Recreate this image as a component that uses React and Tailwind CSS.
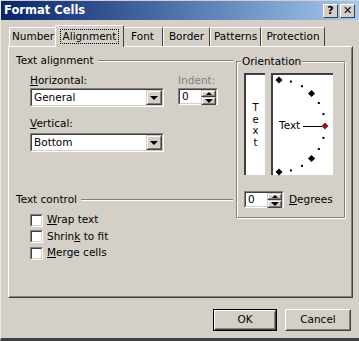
import React from "react";

const font = { fontFamily: "'DejaVu Sans', 'Liberation Sans', sans-serif" };

function Sunken({ className = "", children }) {
  return (
    <div className={"border border-t-[#808080] border-l-[#808080] border-b-white border-r-white " + className}>
      <div className="h-full w-full border border-t-[#404040] border-l-[#404040] border-b-[#d4d0c8] border-r-[#d4d0c8] bg-white flex items-center">
        {children}
      </div>
    </div>
  );
}

function ArrowBtn({ up = false, className = "" }) {
  return (
    <div className={"bg-[#d4d0c8] border border-t-[#d4d0c8] border-l-[#d4d0c8] border-b-[#404040] border-r-[#404040] flex " + className}>
      <div className="flex-1 border border-t-white border-l-white border-b-[#808080] border-r-[#808080] flex items-center justify-center">
        <div className={up ? "w-0 h-0 border-x-[3px] border-x-transparent border-b-[3px] border-b-black" : "w-0 h-0 border-x-[4px] border-x-transparent border-t-[4px] border-t-black"} />
      </div>
    </div>
  );
}

function Combo({ value }) {
  return (
    <Sunken className="w-[134px] h-[19px]">
      <span className="flex-1 pl-[2px] text-[10.5px] leading-none">{value}</span>
      <ArrowBtn className="w-[16px] h-[15px]" />
    </Sunken>
  );
}

function Spin({ value }) {
  return (
    <Sunken className="w-[40px] h-[17px]">
      <span className="flex-1 pl-[2px] text-[10.5px] leading-none">{value}</span>
      <div className="flex flex-col w-[15px] h-full">
        <ArrowBtn up className="h-[7.5px]" />
        <ArrowBtn className="h-[7.5px]" />
      </div>
    </Sunken>
  );
}

function Check({ label, u }) {
  const i = label.indexOf(u);
  return (
    <div className="flex items-center gap-[4px] h-[16.5px]">
      <div className="w-[13px] h-[13px] border border-t-[#808080] border-l-[#808080] border-b-white border-r-white">
        <div className="w-full h-full border border-t-[#404040] border-l-[#404040] border-b-[#d4d0c8] border-r-[#d4d0c8] bg-white" />
      </div>
      <span className="text-[10.5px]">
        {label.slice(0, i)}
        <span className="underline">{u}</span>
        {label.slice(i + 1)}
      </span>
    </div>
  );
}

function Tab({ label, selected, w }) {
  if (selected) {
    return (
      <div className={"relative z-10 -mb-[1px] h-[22px] bg-[#d4d0c8] border-t border-l border-t-white border-l-white border-r border-r-[#404040] flex items-center justify-center -mx-[2px] " + w}>
        <span className="text-[10.5px] px-[2px] outline-1 outline-dotted outline-black leading-[13px]">{label}</span>
      </div>
    );
  }
  return (
    <div className={"h-[19px] mt-[3px] bg-[#d4d0c8] border-t border-l border-t-white border-l-white border-r border-r-[#404040] flex items-center justify-center " + w}>
      <span className="text-[10.5px]">{label}</span>
    </div>
  );
}

function Dial() {
  const cx = 6, cy = 51, r = 46;
  const dots = [];
  for (let a = 90; a >= -90; a -= 15) {
    const rad = (a * Math.PI) / 180;
    const x = cx + r * Math.cos(rad);
    const y = cy - r * Math.sin(rad);
    const big = a % 45 === 0 && a !== 0;
    if (a === 0) continue;
    if (big) {
      dots.push(<rect key={a} x={x - 2.5} y={y - 2.5} width={5} height={5} transform={`rotate(45 ${x} ${y})`} fill="black" />);
    } else {
      dots.push(<rect key={a} x={x - 1} y={y - 1} width={2} height={2} fill="black" />);
    }
  }
  return (
    <svg width="60" height="102" className="absolute left-0 top-0">
      {dots}
      <line x1="30" y1={cy + 0.5} x2="49" y2={cy + 0.5} stroke="black" strokeWidth="1" />
      <rect x={52 - 2.5} y={cy - 2.5} width={5} height={5} transform={`rotate(45 52 ${cy})`} fill="#8b1a1a" />
    </svg>
  );
}

export default function App() {
  return (
    <div style={font} className="w-[359px] h-[341px] bg-[#d4d0c8] text-black flex flex-col border-l border-l-[#ece9d8] border-b-[3px] border-b-[#404040] overflow-hidden">
      <div className="h-[19px] bg-linear-to-r from-[#0a246a] to-[#a6caf0] flex items-center justify-between pl-[3px] pr-[4px] mt-[1px]">
        <span className="text-white font-bold text-[11.5px] leading-none">Format Cells</span>
        <div className="flex gap-[2px]">
          <div className="w-[15px] h-[14px] bg-[#d4d0c8] border border-t-white border-l-white border-b-[#404040] border-r-[#404040] flex items-center justify-center text-[11px] font-bold leading-none">?</div>
          <div className="w-[15px] h-[14px] bg-[#d4d0c8] border border-t-white border-l-white border-b-[#404040] border-r-[#404040] flex items-center justify-center text-[11px] font-bold leading-none">✕</div>
        </div>
      </div>

      <div className="flex-1 flex flex-col pl-[7px] pr-[6px] pt-[4px]">
        <div className="flex items-end pl-[1px] h-[22px]">
          <Tab label="Number" w="w-[48px]" />
          <Tab label="Alignment" selected w="w-[69px]" />
          <Tab label="Font" w="w-[41px]" />
          <Tab label="Border" w="w-[47px]" />
          <Tab label="Patterns" w="w-[51px]" />
          <Tab label="Protection" w="w-[64px]" />
        </div>
        <div className="h-[252px] border border-t-white border-l-white border-b-[#404040] border-r-[#404040]">
          <div className="h-full border border-t-transparent border-l-transparent border-b-[#808080] border-r-[#808080] flex pl-[6px] pr-[4px] pt-[6px]">
            <div className="w-[217px] flex flex-col text-[10.5px]">
              <div className="flex items-center gap-[4px] h-[14px]">
                <span>Text alignment</span>
                <div className="flex-1 h-[2px] border-t border-t-[#808080] border-b border-b-white" />
              </div>
              <div className="flex pl-[14px] mt-[5px] gap-[14px]">
                <div className="flex flex-col">
                  <span className="h-[14px]"><span className="underline">H</span>orizontal:</span>
                  <div className="mt-[1px]"><Combo value="General" /></div>
                  <span className="h-[14px] mt-[9px]"><span className="underline">V</span>ertical:</span>
                  <div className="mt-[3px]"><Combo value="Bottom" /></div>
                </div>
                <div className="flex flex-col">
                  <span className="h-[14px] text-[#808080]">Indent:</span>
                  <div className="mt-[1px]"><Spin value="0" /></div>
                </div>
              </div>
              <div className="flex items-center gap-[4px] h-[14px] mt-[41px]">
                <span>Text control</span>
                <div className="flex-1 h-[2px] border-t border-t-[#808080] border-b border-b-white" />
              </div>
              <div className="flex flex-col pl-[14px] mt-[5px]">
                <Check label="Wrap text" u="W" />
                <Check label="Shrink to fit" u="k" />
                <Check label="Merge cells" u="M" />
              </div>
            </div>
            <div className="ml-[3px] w-[110px] h-[158px] mt-[7px] border border-t-[#808080] border-l-[#808080] border-b-white border-r-white relative">
              <div className="h-full border border-t-white border-l-white border-b-[#808080] border-r-[#808080] flex flex-col pl-[6px] pt-[10px]">
                <span className="absolute -top-[8px] left-[4px] px-[1px] bg-[#d4d0c8] text-[10.5px] leading-[14px]">Orientation</span>
                <div className="flex gap-[6px]">
                  <div className="w-[21px] h-[102px] border-l-2 border-t-2 border-l-[#404040] border-t-[#404040] bg-white flex flex-col items-center justify-center text-[10px] leading-[11.5px]">
                    <span>T</span><span>e</span><span>x</span><span>t</span>
                  </div>
                  <div className="relative w-[62px] h-[102px] border-l-2 border-t-2 border-l-[#404040] border-t-[#404040] bg-white">
                    <Dial />
                    <span className="absolute left-[6px] top-[43px] text-[10.5px] leading-[14px]">Text</span>
                  </div>
                </div>
                <div className="flex items-center gap-[5px] mt-[16px]">
                  <Spin value="0" />
                  <span className="text-[10.5px]"><span className="underline">D</span>egrees</span>
                </div>
              </div>
            </div>
          </div>
        </div>
        <div className="flex justify-end gap-[8px] mt-[11px] pr-[2px]">
          <div className="w-[64px] h-[22px] border border-black">
            <div className="h-full border border-t-white border-l-white border-b-[#404040] border-r-[#404040]">
              <div className="h-full border border-t-transparent border-l-transparent border-b-[#808080] border-r-[#808080] flex items-center justify-center text-[10.5px]">OK</div>
            </div>
          </div>
          <div className="w-[66px] h-[22px] border border-t-white border-l-white border-b-[#404040] border-r-[#404040]">
            <div className="h-full border border-t-transparent border-l-transparent border-b-[#808080] border-r-[#808080] flex items-center justify-center text-[10.5px]">Cancel</div>
          </div>
        </div>
      </div>
    </div>
  );
}
